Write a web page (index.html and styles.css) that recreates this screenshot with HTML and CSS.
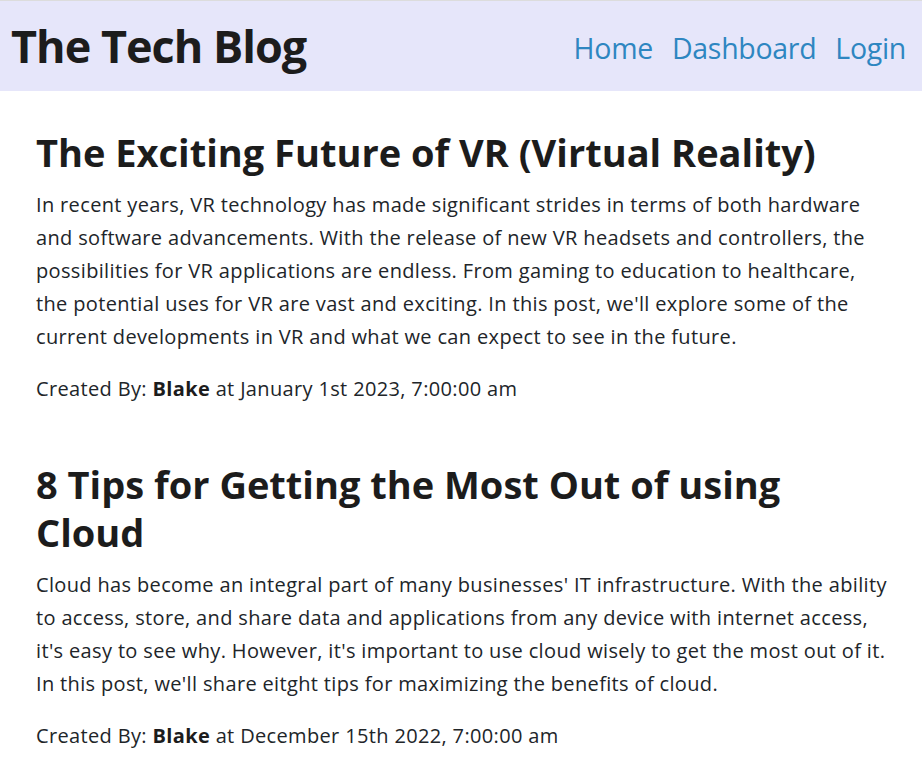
FILE: index.html
```html
<!DOCTYPE html>
<html lang="en">
<head>
<meta charset="utf-8">
<title>The Tech Blog</title>
<link rel="stylesheet" href="styles.css">
</head>
<body>
<header class="site-header">
  <h1 class="brand">The Tech Blog</h1>
  <nav class="nav">
    <a href="#" class="nav-link">Home</a>
    <a href="#" class="nav-link">Dashboard</a>
    <a href="#" class="nav-link">Login</a>
  </nav>
</header>
<main class="posts">
  <article class="post">
    <h2 class="post-title">The Exciting Future of VR (Virtual Reality)</h2>
    <p class="post-body">In recent years, VR technology has made significant strides in terms of both hardware<br>and software advancements. With the release of new VR headsets and controllers, the<br>possibilities for VR applications are endless. From gaming to education to healthcare,<br>the potential uses for VR are vast and exciting. In this post, we'll explore some of the<br>current developments in VR and what we can expect to see in the future.</p>
    <p class="post-meta">Created By: <strong>Blake</strong> at January 1st 2023, 7:00:00 am</p>
  </article>
  <article class="post">
    <h2 class="post-title">8 Tips for Getting the Most Out of using<br>Cloud</h2>
    <p class="post-body">Cloud has become an integral part of many businesses' IT infrastructure. With the ability<br>to access, store, and share data and applications from any device with internet access,<br>it's easy to see why. However, it's important to use cloud wisely to get the most out of it.<br>In this post, we'll share eitght tips for maximizing the benefits of cloud.</p>
    <p class="post-meta">Created By: <strong>Blake</strong> at December 15th 2022, 7:00:00 am</p>
  </article>
</main>
</body>
</html>
```
FILE: styles.css
```css
html, body {
  margin: 0;
  padding: 0;
}
body {
  font-family: "Open Sans", "Noto Sans", sans-serif;
  color: #212529;
  background: #ffffff;
  border-top: 1px solid #dcdcdc;
  overflow-x: hidden;
}
.site-header {
  background: #e6e6fa;
  height: 90px;
  display: flex;
  align-items: center;
  justify-content: space-between;
  padding: 0 16px 0 11px;
}
.brand {
  margin: 0;
  font-size: 45px;
  font-weight: 700;
  letter-spacing: -1px;
  color: #1c1c1c;
  line-height: 1;
  padding-bottom: 2px;
}
.nav {
  display: flex;
  gap: 19px;
  padding-top: 3px;
}
.nav-link {
  font-size: 28.5px;
  color: #2e86c1;
  text-decoration: none;
  letter-spacing: -0.3px;
}
.posts {
  padding: 37px 0 0 36px;
}
.post {
  margin-bottom: 55px;
}
.post-title {
  margin: 0;
  font-size: 38px;
  line-height: 48px;
  font-weight: 700;
  color: #1c1c1c;
  white-space: nowrap;
}
.post-body {
  margin: 12px 0 0;
  font-size: 20px;
  line-height: 33px;
  letter-spacing: 0.35px;
  white-space: nowrap;
}
.post-meta {
  margin: 19px 0 0;
  font-size: 20px;
  line-height: 33px;
  letter-spacing: 0.35px;
  white-space: nowrap;
}
.post-meta strong {
  font-weight: 700;
  color: #1c1c1c;
}
```
